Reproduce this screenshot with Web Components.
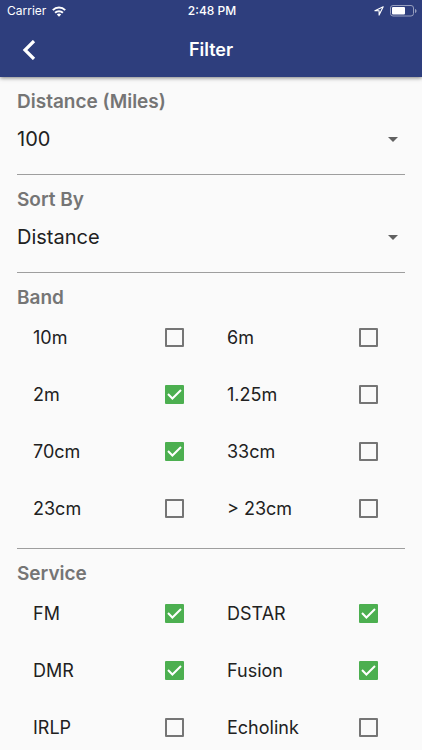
<!DOCTYPE html>
<html lang="en">
<head>
<meta charset="utf-8">
<meta name="viewport" content="width=device-width, initial-scale=1">
<title>Filter</title>
<style>
body { margin: 0; background: #fafafa; color: #212121; font-family: Inter, "Liberation Sans", sans-serif; }
</style>
</head>
<body>
<filter-page></filter-page>
<script>
class StatusBar extends HTMLElement {
  constructor() {
    super();
    this.attachShadow({ mode: "open" }).innerHTML = `
      <style>
        :host { display: grid; grid-template-columns: 1fr auto 1fr; align-items: center; height: 22px; padding: 0 5px 0 7px; font-size: 12px; line-height: 16px; }
        .left, .right { display: flex; align-items: center; gap: 6px; }
        .right { justify-content: flex-end; }
        .time { font-weight: 500; }
        svg { display: block; }
      </style>
      <div class="left"><span>Carrier</span>
        <svg width="14" height="11" viewBox="0 0 14 11" fill="none" stroke="#fff" stroke-width="2"><path d="M.8 4.1a8.8 8.8 0 0 1 12.4 0M3.1 6.8a5.5 5.5 0 0 1 7.8 0"/><path d="M7 10.8 4.8 8.5a3.2 3.2 0 0 1 4.4 0z" fill="#fff" stroke="none"/></svg>
      </div>
      <div class="time">2:48 PM</div>
      <div class="right">
        <svg width="10" height="10" viewBox="0 0 10 10" fill="none" stroke="#fff" stroke-width="1.1" stroke-linejoin="round"><path d="M9.2.8.9 4.8h4.2v4.3z"/></svg>
        <svg width="27" height="12" viewBox="0 0 27 12"><rect x=".5" y=".5" width="23" height="10.5" rx="2.5" fill="none" stroke="#969ebe"/><rect x="2" y="2" width="13" height="7.5" rx="1" fill="#fff"/><path d="M25 4c2 .6 2 3.4 0 4z" fill="#969ebe"/></svg>
      </div>`;
  }
}
customElements.define("status-bar", StatusBar);

class AppHeader extends HTMLElement {
  constructor() {
    super();
    this.attachShadow({ mode: "open" }).innerHTML = `
      <style>
        :host { display: block; position: relative; background: #2e3e7d; color: #fff; box-shadow: 0 1px 4px rgba(0,0,0,.5); }
        .bar { display: grid; grid-template-columns: 58px 1fr 58px; align-items: center; height: 55px; }
        button { display: grid; place-items: center; width: 58px; height: 55px; margin: 0; padding: 0; border: 0; background: none; color: inherit; }
        h1 { margin: 0; font-size: 18px; line-height: 24px; font-weight: 600; text-align: center; }
      </style>
      <status-bar></status-bar>
      <div class="bar">
        <button type="button" aria-label="Back"><svg width="14" height="20" viewBox="0 0 14 20" fill="none" stroke="#fff" stroke-width="3.2"><path d="M12 1 3 10l9 9"/></svg></button>
        <h1><slot></slot></h1>
      </div>`;
  }
}
customElements.define("app-header", AppHeader);

class FilterSection extends HTMLElement {
  constructor() {
    super();
    this.attachShadow({ mode: "open" }).innerHTML = `
      <style>
        :host { display: block; margin: 0 17px; border-bottom: 1px solid #9e9e9e; }
        h2 { margin: 0; padding-top: 13px; font-size: 19px; line-height: 23px; font-weight: 600; color: #757575; }
      </style>
      <h2></h2>
      <slot></slot>`;
    this.shadowRoot.querySelector("h2").textContent = this.getAttribute("heading");
  }
}

class FilterSelect extends HTMLElement {
  constructor() {
    super();
    this.attachShadow({ mode: "open" }).innerHTML = `
      <style>
        :host { display: grid; align-items: center; padding-bottom: 9px; }
        select, svg { grid-area: 1 / 1; }
        select { appearance: none; width: 100%; height: 52px; margin: 0; padding: 0 32px 0 0; border: 0; border-radius: 0; background: none; color: #212121; font: 400 20px/28px Inter, "Liberation Sans", sans-serif; }
        svg { justify-self: end; margin-right: 7px; pointer-events: none; }
      </style>
      <select><option></option></select>
      <svg width="10" height="5" viewBox="0 0 10 5"><path d="M0 0h10L5 5z" fill="#616161"/></svg>`;
    this.shadowRoot.querySelector("select").setAttribute("aria-label", this.getAttribute("label"));
    this.shadowRoot.querySelector("option").textContent = this.getAttribute("value");
  }
}

class FilterGrid extends HTMLElement {
  constructor() {
    super();
    this.attachShadow({ mode: "open" }).innerHTML = `
      <style>:host { display: grid; grid-template-columns: 1fr 1fr; padding-bottom: 11px; }</style>
      <slot></slot>`;
  }
}

class FilterCheck extends HTMLElement {
  constructor() {
    super();
    this.attachShadow({ mode: "open" }).innerHTML = `
      <style>
        :host { display: block; }
        label { display: flex; align-items: center; justify-content: space-between; height: 57px; padding: 0 27px 0 16px; font-size: 18px; line-height: 24px; }
        .box { display: grid; }
        input, svg { grid-area: 1 / 1; }
        input { appearance: none; box-sizing: border-box; width: 19px; height: 19px; margin: 0; border: 2px solid #757575; border-radius: 1px; }
        input:checked { border-color: #4caf50; background: #4caf50; }
        svg { display: none; pointer-events: none; }
        input:checked + svg { display: block; }
      </style>
      <label><slot></slot><span class="box"><input type="checkbox"><svg width="19" height="19" viewBox="0 0 19 19" fill="none" stroke="#fff" stroke-width="2"><path d="m3 9 4.4 4.5L16 5"/></svg></span></label>`;
    this.shadowRoot.querySelector("input").checked = this.hasAttribute("checked");
  }
}

class FilterPage extends HTMLElement {
  constructor() {
    super();
    this.attachShadow({ mode: "open" }).innerHTML = `
      <style>:host { display: block; height: 100vh; overflow: hidden; }</style>
      <app-header>Filter</app-header>
      <main>
        <filter-section heading="Distance (Miles)"><filter-select label="Distance (Miles)" value="100"></filter-select></filter-section>
        <filter-section heading="Sort By"><filter-select label="Sort By" value="Distance"></filter-select></filter-section>
        <filter-section heading="Band">
          <filter-grid>
            <filter-check>10m</filter-check><filter-check>6m</filter-check>
            <filter-check checked>2m</filter-check><filter-check>1.25m</filter-check>
            <filter-check checked>70cm</filter-check><filter-check>33cm</filter-check>
            <filter-check>23cm</filter-check><filter-check>&gt; 23cm</filter-check>
          </filter-grid>
        </filter-section>
        <filter-section heading="Service">
          <filter-grid>
            <filter-check checked>FM</filter-check><filter-check checked>DSTAR</filter-check>
            <filter-check checked>DMR</filter-check><filter-check checked>Fusion</filter-check>
            <filter-check>IRLP</filter-check><filter-check>Echolink</filter-check>
          </filter-grid>
        </filter-section>
      </main>`;
  }
}
customElements.define("filter-check", FilterCheck);
customElements.define("filter-grid", FilterGrid);
customElements.define("filter-select", FilterSelect);
customElements.define("filter-section", FilterSection);
customElements.define("filter-page", FilterPage);
</script>
</body>
</html>
